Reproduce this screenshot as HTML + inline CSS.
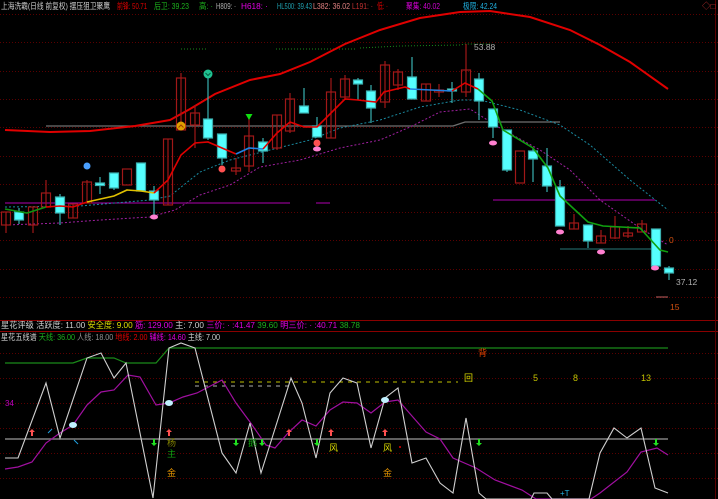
<!DOCTYPE html>
<html><head><meta charset="utf-8"><style>
html,body{margin:0;padding:0;background:#000;width:718px;height:499px;overflow:hidden}
svg{display:block;font-family:"Liberation Sans","Noto Sans CJK SC",sans-serif}
</style></head><body>
<svg width="718" height="499" viewBox="0 0 718 499" xmlns="http://www.w3.org/2000/svg">
<rect width="718" height="499" fill="#000"/>
<g stroke="#5a0000" stroke-dasharray="1,2" stroke-width="1">
<line x1="0" y1="14.5" x2="718" y2="14.5"/>
<line x1="0" y1="42.5" x2="718" y2="42.5"/>
<line x1="0" y1="71.5" x2="718" y2="71.5"/>
<line x1="0" y1="99.5" x2="718" y2="99.5"/>
<line x1="0" y1="127.5" x2="718" y2="127.5"/>
<line x1="0" y1="156.5" x2="718" y2="156.5"/>
<line x1="0" y1="184.5" x2="718" y2="184.5"/>
<line x1="0" y1="212.5" x2="718" y2="212.5"/>
<line x1="0" y1="240.5" x2="718" y2="240.5"/>
<line x1="0" y1="269.5" x2="718" y2="269.5"/>
<line x1="0" y1="297.5" x2="718" y2="297.5"/>
<line x1="0" y1="353.5" x2="718" y2="353.5"/>
<line x1="0" y1="378.5" x2="718" y2="378.5"/>
<line x1="0" y1="403.5" x2="718" y2="403.5"/>
<line x1="0" y1="428.5" x2="718" y2="428.5"/>
<line x1="0" y1="453.5" x2="718" y2="453.5"/>
<line x1="0" y1="478.5" x2="718" y2="478.5"/>
</g>
<line x1="0" y1="320.5" x2="718" y2="320.5" stroke="#8a0000"/>
<line x1="0" y1="331.5" x2="718" y2="331.5" stroke="#8a0000"/>
<line x1="715.5" y1="0" x2="715.5" y2="499" stroke="#5a0000"/>

<g font-size="8.5">
<text x="1" y="9" fill="#c8c8c8" textLength="109" lengthAdjust="spacingAndGlyphs">上海洗霸(日线 前复权) 摆压狙卫聚鹰</text>
<text x="117" y="9" fill="#e00000" textLength="30" lengthAdjust="spacingAndGlyphs">前锋: 50.71</text>
<text x="154" y="9" fill="#1cb01c" textLength="35" lengthAdjust="spacingAndGlyphs">后卫: 39.23</text>
<text x="199" y="9" fill="#1cb01c" textLength="14" lengthAdjust="spacingAndGlyphs">高: ·</text>
<text x="216" y="9" fill="#b0b0b0" textLength="20" lengthAdjust="spacingAndGlyphs">H809: ·</text>
<text x="241" y="9" fill="#e000e0" textLength="27" lengthAdjust="spacingAndGlyphs">H618: ·</text>
<text x="277" y="9" fill="#20a0b0" textLength="35" lengthAdjust="spacingAndGlyphs">HL500: 39.43</text>
<text x="313" y="9" fill="#e08080" textLength="37" lengthAdjust="spacingAndGlyphs">L382: 36.02</text>
<text x="352" y="9" fill="#c03030" textLength="21" lengthAdjust="spacingAndGlyphs">L191: ·</text>
<text x="377" y="9" fill="#e00000" textLength="11" lengthAdjust="spacingAndGlyphs">低: ·</text>
<text x="406" y="9" fill="#d000d0" textLength="34" lengthAdjust="spacingAndGlyphs">聚集: 40.02</text>
<text x="463" y="9" fill="#20b0e0" textLength="34" lengthAdjust="spacingAndGlyphs">极限: 42.24</text>
<text x="702" y="9" fill="#c03030">◇□</text>
</g>

<g stroke="#1a8a1a" stroke-dasharray="1,2">
<line x1="181" y1="49" x2="206" y2="49"/>
<line x1="276" y1="49" x2="355" y2="49"/>
<polyline fill="none" points="360,48 400,46 460,45 465,44 492,44"/>
</g>
<polyline fill="none" stroke="#707070" stroke-width="1.3" points="46,126 453,126 465,122 560,122"/>
<line x1="5" y1="203" x2="290" y2="203" stroke="#b000b0"/>
<line x1="316" y1="203" x2="330" y2="203" stroke="#b000b0"/>
<line x1="493" y1="200" x2="655" y2="200" stroke="#b000b0"/>
<line x1="560" y1="249" x2="660" y2="249" stroke="#206060" stroke-width="1.3"/>

<polyline fill="none" stroke="#1a8aa0" stroke-dasharray="2,2" points="5,207 80,206 150,200 170,196 200,172 230,160 270,150 310,140 340,128 380,120 420,107 460,100 480,100 520,110 560,125 590,145 630,180 668,210"/>
<polyline fill="none" stroke="#a020a0" stroke-dasharray="2,2" points="5,225 60,223 100,220 150,217 175,210 200,195 230,185 260,167 300,160 340,148 380,140 410,127 440,112 470,109 500,128 540,150 570,170 600,200 640,228 668,245"/>

<polyline fill="none" stroke="#e00000" stroke-width="2" points="5,130 50,132 90,131 135,126 170,120 190,109 215,94 250,80 280,74 310,62 345,44 380,30 420,18 460,12 490,11 530,17 570,30 600,45 630,62 668,89"/>

<g stroke="#a01818" stroke-width="1.2" fill="none">
<line x1="6" y1="212" x2="6" y2="233"/><rect x="1.5" y="212" width="9" height="13"/>
<line x1="33" y1="207" x2="33" y2="233"/><rect x="28.5" y="207" width="9" height="18"/>
<line x1="46" y1="180" x2="46" y2="207"/><rect x="41.5" y="193" width="9" height="14"/>
<line x1="73" y1="204" x2="73" y2="218"/><rect x="68.5" y="204" width="9" height="14"/>
<line x1="87" y1="180" x2="87" y2="203"/><rect x="82.5" y="182" width="9" height="21"/>
<rect x="122.5" y="169" width="9" height="16"/>
<line x1="168" y1="139" x2="168" y2="205"/><rect x="163.5" y="139" width="9" height="66"/>
<line x1="181" y1="73" x2="181" y2="130"/><rect x="176.5" y="78" width="9" height="52"/>
<line x1="195" y1="105" x2="195" y2="148"/><rect x="190.5" y="113" width="9" height="12"/>
<line x1="236" y1="158" x2="236" y2="175"/><rect x="231.5" y="168" width="9" height="3"/>
<line x1="249" y1="118" x2="249" y2="172"/><rect x="244.5" y="136" width="9" height="30"/>
<line x1="277" y1="115" x2="277" y2="150"/><rect x="272.5" y="115" width="9" height="33"/>
<line x1="290" y1="93" x2="290" y2="133"/><rect x="285.5" y="99" width="9" height="32"/>
<line x1="331" y1="78" x2="331" y2="138"/><rect x="326.5" y="92" width="9" height="46"/>
<line x1="345" y1="75" x2="345" y2="100"/><rect x="340.5" y="79" width="9" height="18"/>
<line x1="385" y1="61" x2="385" y2="108"/><rect x="380.5" y="65" width="9" height="37"/>
<line x1="398" y1="69" x2="398" y2="90"/><rect x="393.5" y="72" width="9" height="13"/>
<line x1="426" y1="84" x2="426" y2="101"/><rect x="421.5" y="84" width="9" height="17"/>
<line x1="439" y1="84" x2="439" y2="97"/><rect x="434.5" y="90" width="9" height="2"/>
<line x1="466" y1="44" x2="466" y2="97"/><rect x="461.5" y="70" width="9" height="22"/>
<rect x="515.5" y="151" width="9" height="32"/>
<line x1="574" y1="214" x2="574" y2="229"/><rect x="569.5" y="223" width="9" height="6"/>
<line x1="601" y1="230" x2="601" y2="243"/><rect x="596.5" y="236" width="9" height="7"/>
<line x1="615" y1="216" x2="615" y2="239"/><rect x="610.5" y="227" width="9" height="11"/>
<line x1="628" y1="226" x2="628" y2="238"/><rect x="623.5" y="233" width="9" height="3"/>
<line x1="642" y1="220" x2="642" y2="232"/><rect x="637.5" y="224" width="9" height="8"/>
</g>
<g stroke="#3ab0b0" stroke-width="1.2" fill="#55ffff">
<line x1="19" y1="208" x2="19" y2="224"/><rect x="14.5" y="212" width="9" height="8"/>
<line x1="60" y1="194" x2="60" y2="225"/><rect x="55.5" y="197" width="9" height="16"/>
<line x1="100" y1="177" x2="100" y2="194"/><rect x="95.5" y="183" width="9" height="2.5"/>
<line x1="114" y1="173" x2="114" y2="190"/><rect x="109.5" y="173" width="9" height="15"/>
<rect x="136.5" y="163" width="9" height="28"/>
<line x1="154" y1="186" x2="154" y2="217"/><rect x="149.5" y="191" width="9" height="9"/>
<line x1="208" y1="75" x2="208" y2="140"/><rect x="203.5" y="119" width="9" height="19"/>
<line x1="222" y1="134" x2="222" y2="165"/><rect x="217.5" y="134" width="9" height="24"/>
<line x1="263" y1="138" x2="263" y2="163"/><rect x="258.5" y="142" width="9" height="9"/>
<line x1="304" y1="88" x2="304" y2="113"/><rect x="299.5" y="106" width="9" height="7"/>
<line x1="317" y1="117" x2="317" y2="137"/><rect x="312.5" y="126" width="9" height="11"/>
<line x1="358" y1="78" x2="358" y2="100"/><rect x="353.5" y="80" width="9" height="4"/>
<line x1="371" y1="85" x2="371" y2="123"/><rect x="366.5" y="91" width="9" height="17"/>
<line x1="412" y1="57" x2="412" y2="99"/><rect x="407.5" y="77" width="9" height="22"/>
<line x1="452" y1="82" x2="452" y2="103"/><rect x="447.5" y="89" width="9" height="2"/>
<line x1="479" y1="73" x2="479" y2="120"/><rect x="474.5" y="79" width="9" height="22"/>
<line x1="493" y1="109" x2="493" y2="138"/><rect x="488.5" y="109" width="9" height="18"/>
<line x1="507" y1="130" x2="507" y2="172"/><rect x="502.5" y="130" width="9" height="40"/>
<line x1="533" y1="148" x2="533" y2="182"/><rect x="528.5" y="151" width="9" height="8"/>
<line x1="547" y1="148" x2="547" y2="192"/><rect x="542.5" y="166" width="9" height="20"/>
<line x1="560" y1="180" x2="560" y2="226"/><rect x="555.5" y="187" width="9" height="39"/>
<line x1="588" y1="225" x2="588" y2="248"/><rect x="583.5" y="225" width="9" height="16"/>
<line x1="656" y1="229" x2="656" y2="266"/><rect x="651.5" y="229" width="9" height="37"/>
<line x1="669" y1="266" x2="669" y2="280"/><rect x="664.5" y="268" width="9" height="5"/>
</g>

<polyline fill="none" stroke="#109010" stroke-width="1.6" points="5,209 27,213 46,207"/>
<polyline fill="none" stroke="#e00000" stroke-width="1.6" points="46,207 60,206 73,207 87,202"/>
<polyline fill="none" stroke="#e0c000" stroke-width="1.6" points="87,202 114,196 127,190 141,191 154,193"/>
<polyline fill="none" stroke="#e00000" stroke-width="1.6" points="154,193 168,180 181,155 195,143 208,142 222,148 236,154"/>
<polyline fill="none" stroke="#2080e0" stroke-width="1.6" points="236,154 249,148 263,149"/>
<polyline fill="none" stroke="#e00000" stroke-width="1.6" points="263,149 277,133 290,122 304,127 317,127 331,113 345,99 358,100 366,101 376,102 384,92 405,87 410,89"/>
<polyline fill="none" stroke="#2080e0" stroke-width="1.6" points="410,89 452,91"/>
<polyline fill="none" stroke="#e00000" stroke-width="1.6" points="452,91 465,83 478,89"/>
<polyline fill="none" stroke="#10a010" stroke-width="1.6" points="478,89 492,101 503,130 533,148 548,168 560,196 588,222 603,226 640,228 660,250 668,252"/>

<circle cx="181" cy="126" r="4.5" fill="#e0a000"/><path d="M178.5,127.5 L181,125 L183.5,127.5" stroke="#a04000" fill="none"/>
<circle cx="208" cy="74" r="4.5" fill="#20c090"/><path d="M205.5,73 L208,75.5 L210.5,73" stroke="#006040" fill="none"/>
<path d="M245.5,114 L252.5,114 L249,120 Z" fill="#10e010"/>
<circle cx="87" cy="166" r="3.5" fill="#4aa0ff"/>
<circle cx="222" cy="169" r="3.5" fill="#ff5050"/>
<circle cx="317" cy="143" r="3.5" fill="#ff5050"/>
<g fill="#ff80d0">
<ellipse cx="154" cy="217" rx="4" ry="2.5"/><ellipse cx="317" cy="149" rx="4" ry="2.5"/>
<ellipse cx="493" cy="143" rx="4" ry="2.5"/><ellipse cx="560" cy="232" rx="4" ry="2.5"/>
<ellipse cx="601" cy="252" rx="4" ry="2.5"/><ellipse cx="655" cy="268" rx="4" ry="2.5"/>
</g>
<g font-size="8.5">
<text x="474" y="50" fill="#b0b0b0">53.88</text>
<text x="676" y="285" fill="#b0b0b0">37.12</text>
<text x="669" y="243" fill="#d05010">0</text>
<text x="670" y="310" fill="#d05010">15</text>
</g>
<line x1="656" y1="297" x2="668" y2="297" stroke="#c06060"/>

<g font-size="8.5">
<text x="1" y="328" fill="#d0d0d0" textLength="359" lengthAdjust="spacingAndGlyphs">星花评级 <tspan>活跃度: 11.00</tspan> <tspan fill="#e0e000">安全度: 9.00</tspan> <tspan fill="#e000e0">筋: 129.00</tspan> <tspan fill="#d0d0d0">主: 7.00</tspan> <tspan fill="#e000e0">三价: · :41.47</tspan> <tspan fill="#1cb01c">39.60</tspan> <tspan fill="#e000e0">明三价: · :40.71</tspan> <tspan fill="#1cb01c">38.78</tspan></text>
<text x="1" y="340" fill="#d0d0d0" textLength="219" lengthAdjust="spacingAndGlyphs">星花五线谱 <tspan fill="#1cb01c">天线: 36.00</tspan>  <tspan fill="#909090">  人线: 18.00</tspan> <tspan fill="#e00000">地线: 2.00</tspan> <tspan fill="#e000e0">辅线: 14.60</tspan> <tspan fill="#d0d0d0">主线: 7.00</tspan></text>
</g>

<line x1="5" y1="439" x2="668" y2="439" stroke="#808080" stroke-width="1.5"/>
<polyline fill="none" stroke="#1a8a1a" stroke-width="1.2" points="5,363 73,363 87,358 114,358 126,363 156,363 169,348 668,348"/>
<g stroke-dasharray="4,5">
<line x1="195" y1="382" x2="458" y2="382" stroke="#c0c000"/>
<line x1="195" y1="386" x2="293" y2="386" stroke="#b0b0b0"/>
</g>
<polyline fill="none" stroke="#a010a0" stroke-width="1.2" points="5,469 18,467 32,462 46,443 60,433 73,425 87,405 101,392 114,390 128,375 140,377 156,405 169,403 183,397 197,393 222,380 236,403 250,422 266,445 275,448 288,433 302,420 316,426 330,410 343,402 357,403 371,413 385,402 398,400 426,432 440,439 453,458 476,468 495,480 522,490 536,499 591,499 600,493 627,472 641,452 657,448 668,455"/>
<polyline fill="none" stroke="#d0d0d0" stroke-width="1.1" points="5,458 18,458 46,383 60,438 87,358 101,353 114,378 126,363 153,498 169,348 181,343 195,348 222,453 236,473 250,423 261,473 291,378 302,403 316,458 330,393 343,378 357,383 371,448 385,398 398,388 412,463 426,458 440,483 453,493 466,418 479,493 486,499 531,499 534,493 547,493 552,499 589,499 600,453 614,428 627,438 641,428 655,488 668,493"/>

<g font-size="9">
<text x="478" y="356" fill="#e04000">背</text>
<text x="464" y="381" fill="#e0e000">回</text>
<text x="533" y="381" fill="#c0c000">5</text>
<text x="573" y="381" fill="#c0c000">8</text>
<text x="641" y="381" fill="#c0c000">13</text>
<text x="5" y="406" fill="#c000c0" font-size="8">34</text>
<text x="167" y="446" fill="#808000">杨</text>
<text x="167" y="457" fill="#10a010">主</text>
<text x="167" y="476" fill="#e09000">金</text>
<text x="248" y="446" fill="#10a010">鹅</text>
<text x="329" y="451" fill="#e0e000">风</text>
<text x="383" y="451" fill="#e0e000">风</text>
<text x="383" y="476" fill="#e09000">金</text>
<text x="560" y="496" fill="#20b0e0" font-size="8">+T</text>
</g>
<g fill="#ff5050">
<path d="M32,429 l3,3 h-2 v4 h-2 v-4 h-2 z"/><path d="M169,429 l3,3 h-2 v4 h-2 v-4 h-2 z"/>
<path d="M289,429 l3,3 h-2 v4 h-2 v-4 h-2 z"/><path d="M331,429 l3,3 h-2 v4 h-2 v-4 h-2 z"/>
<path d="M385,429 l3,3 h-2 v4 h-2 v-4 h-2 z"/>
</g>
<g fill="#20e020">
<path d="M154,446 l3,-3 h-2 v-4 h-2 v4 h-2 z"/><path d="M236,446 l3,-3 h-2 v-4 h-2 v4 h-2 z"/>
<path d="M262,446 l3,-3 h-2 v-4 h-2 v4 h-2 z"/><path d="M317,446 l3,-3 h-2 v-4 h-2 v4 h-2 z"/>
<path d="M479,446 l3,-3 h-2 v-4 h-2 v4 h-2 z"/><path d="M656,446 l3,-3 h-2 v-4 h-2 v4 h-2 z"/>
</g>
<g stroke="#20a0e0"><line x1="48" y1="433" x2="52" y2="429"/><line x1="74" y1="440" x2="78" y2="444"/></g>
<g fill="#c0f0ff">
<ellipse cx="73" cy="425" rx="4" ry="3"/><ellipse cx="169" cy="403" rx="4" ry="3"/><ellipse cx="385" cy="400" rx="4" ry="3"/>
</g>
<circle cx="400" cy="447" r="1" fill="#e00000"/>
</svg>
</body></html>
